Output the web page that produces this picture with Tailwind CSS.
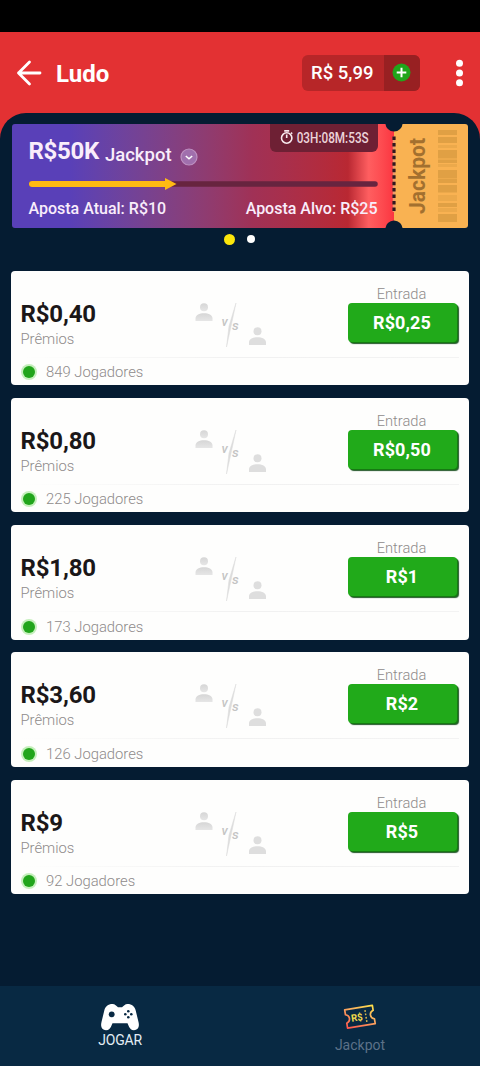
<!DOCTYPE html>
<html lang="pt-BR">
<head>
<meta charset="utf-8">
<title>Ludo</title>
<script src="https://cdn.jsdelivr.net/npm/@tailwindcss/browser@4"></script>
</head>
<body class="w-[480px] h-[1066px] overflow-hidden bg-[#e33133] font-['Roboto',sans-serif] flex flex-col">
<div class="h-8 bg-black shrink-0"></div>
<header class="h-[81px] shrink-0 flex items-center pl-4 pr-[14px] text-white">
  <svg class="w-[26px] h-[26px]" viewBox="0 0 26 26" fill="none" stroke="#fff" stroke-width="2.8" stroke-linecap="round" stroke-linejoin="round"><path d="M13.5 2 2.500 13l11 11M2.500 13H24"/></svg>
  <h1 class="ml-[14px] mt-[2px] text-[24px] leading-7 font-bold">Ludo</h1>
  <div class="ml-auto flex h-9 w-[118px] rounded-md overflow-hidden bg-[#b72628]">
    <div class="w-[82px] pl-[9px] pt-[2px] flex items-center text-[18.500px] font-medium whitespace-nowrap">R$ 5,99</div>
    <div class="flex-1 bg-[#982022] flex items-center pl-2">
      <svg class="w-[19px] h-[19px]" viewBox="0 0 19 19"><circle cx="9.500" cy="9.500" r="9" fill="#21a51b"/><path d="M9.500 4.700v9.600M4.700 9.500h9.600" stroke="#fff" stroke-width="2"/></svg>
    </div>
  </div>
  <svg class="ml-[32px] w-[14px] h-[28px]" viewBox="0 0 14 28" fill="#fff"><circle cx="7.500" cy="4.300" r="3.500"/><circle cx="7.500" cy="14" r="3.500"/><circle cx="7.500" cy="23.700" r="3.500"/></svg>
</header>
<main class="flex-1 bg-[#051c32] rounded-t-[26px] pt-[11px] flex flex-col">
  <section class="mx-3 h-[104px] w-[456px] shrink-0 flex rounded-[3px] overflow-hidden relative">
    <div class="w-[382px] h-full bg-linear-to-r from-[#5940b8] from-15% via-[#a03156] via-63% to-[#b92832] to-88% flex flex-col pl-[16.500px] relative text-[#f9edfb]">
      <div class="absolute right-0 top-0 h-full w-[46px] bg-linear-to-r from-[#c42b2e]/0 via-[#ff5e60] via-45% to-[#fb3440]"></div>
      <div class="relative flex items-start h-[55px]">
        <div class="mt-[13px] text-[24px] leading-[28px] font-bold tracking-[-0.300px]">R$50K</div>
        <div class="ml-[6px] mt-[19px] text-[18.500px] leading-6 font-medium">Jackpot</div>
        <svg class="ml-2 mt-[24px] w-[18px] h-[18px]" viewBox="0 0 18 18"><circle cx="9" cy="9" r="8" fill="#a06fad" stroke="#bd90c0" stroke-width="1.200"/><path d="m5.800 8 3.200 2.800L12.200 8" fill="none" stroke="#fff" stroke-width="1.500"/></svg>
      </div>
      <div class="absolute left-[258px] top-0 w-[108px] h-7 rounded-b-md bg-[#6e2034] flex items-center">
        <svg class="w-[108px] h-7" viewBox="0 0 108 28"><g fill="none" stroke="#f8e9ee" stroke-width="1.600"><circle cx="16.700" cy="14" r="5.200"/><path d="M14.200 6.900h5M16.700 10.500V14M21 8.600l1.200 1.200"/></g><text x="26.700" y="18.800" fill="#ecd4da" font-size="14" font-weight="500" font-family="Roboto" textLength="72" lengthAdjust="spacingAndGlyphs">03H:08M:53S</text></svg>
      </div>
      <svg class="relative w-[350px] h-3 -mt-[1px]" viewBox="0 0 350 12"><path d="M3 6h343" stroke="#67243f" stroke-width="5.500" stroke-linecap="round"/><path d="M3 6h137" stroke="#ffba13" stroke-width="6" stroke-linecap="round"/><path d="M136 0l11.500 6L136 12z" fill="#ffba13"/></svg>
      <div class="relative flex justify-between w-[349px] mt-[9px] text-[16px] leading-5 font-medium whitespace-nowrap"><span>Aposta Atual: R$10</span><span>Aposta Alvo: R$25</span></div>
    </div>
    <svg class="w-[74px] h-[104px]" viewBox="0 0 74 104">
      <rect width="74" height="104" fill="#f9b252"/>
      <text transform="translate(30.500 90) rotate(-90)" font-family="Roboto" font-weight="700" font-size="22.500" fill="#a3702f" textLength="76" lengthAdjust="spacingAndGlyphs">Jackpot</text>
      <g fill="#e0a044">
        <path d="M44 6h19v5H44zM44 13h19v6H44zM44 26h19v8H44zM44 36h19v3H44zM44 46h19v8H44zM44 55h19v4H44zM44 61h19v7H44zM44 79h19v4H44zM44 90h19v8H44z"/>
        <path opacity=".5" d="M44 21h19v3H44zM44 34h19v2H44zM44 40h19v3H44zM44 54h19v1H44zM44 68h19v1H44zM44 71h19v6H44zM44 84h19v4H44z"/>
      </g>
    </svg>
    <svg class="absolute left-[372px] top-0 w-5 h-[104px]" viewBox="0 0 20 104" fill="#051c32"><circle cx="10" cy="-1" r="8.600"/><circle cx="10" cy="105" r="8.600"/><path d="M10 12.500v75.500" stroke="#f09a6a" stroke-width="2.500"/><path d="M10 12.500v76" stroke="#31181f" stroke-width="3.200" stroke-dasharray="3.500 2.950"/></svg>
  </section>
  <div class="flex items-center justify-center h-6 shrink-0 gap-[12px] -mt-[1px] pr-[2px]"><span class="w-[11px] h-[11px] rounded-full bg-[#fce60b]"></span><span class="w-2 h-2 rounded-full bg-white"></span></div>
  <section id="games" class="flex flex-col gap-[12.750px] mt-[19.500px] pl-[10.500px]"></section>
</main>
<nav class="h-20 shrink-0 bg-[#082943] grid grid-cols-2">
  <div class="flex flex-col items-center">
    <svg class="mt-[17px] w-[40px] h-[30px]" viewBox="0 0 40 30"><path fill="#fff" d="M12.500 1C15 1 16.500 3 18 4.300h4C23.500 3 25 1 27.500 1 32 1 34.700 3.500 35.700 7.500L38.500 19c1.300 5-.8 8.200-4.500 8.200-3 0-4.200-1.700-5.200-4L27.500 20.200h-15l-1.300 3c-1 2.300-2.200 4-5.200 4-3.700 0-5.800-3.200-4.500-8.200L4.300 7.500C5.300 3.500 8 1 12.500 1z"/><circle cx="11.700" cy="11.300" r="2.900" fill="#082943"/><g fill="#082943"><circle cx="28.300" cy="8.300" r="1.300"/><circle cx="28.300" cy="14.300" r="1.300"/><circle cx="25.300" cy="11.300" r="1.300"/><circle cx="31.300" cy="11.300" r="1.300"/></g></svg>
    <span class="text-[14px] leading-4 text-[#e3edf5] -mt-[1px] tracking-[-.2px]">JOGAR</span>
  </div>
  <div class="flex flex-col items-center">
    <svg class="mt-[16px] w-[36px] h-[30px]" viewBox="0 0 36 30"><defs><linearGradient id="ticket" x1="0" y1="1" x2="1" y2="0"><stop stop-color="#ff554c"/><stop offset=".6" stop-color="#f9ae61"/><stop offset="1" stop-color="#ffe04a"/></linearGradient></defs><g transform="rotate(-9 18 15)"><path d="M4 5.500h28v5c-4.500 1.500-4.500 7 0 8.500V24H4v-5c4.500-1.500 4.500-7 0-8.500z" fill="none" stroke="url(#ticket)" stroke-width="1.700" stroke-linejoin="round"/><text x="9" y="18.500" font-family="Roboto" font-weight="700" font-size="10" fill="#f5dc4c" textLength="11.500" lengthAdjust="spacingAndGlyphs">R$</text><path d="M24 9v12" stroke="#d8b750" stroke-width="1.500" stroke-dasharray="1.700 1.700"/></g></svg>
    <span class="text-[14px] leading-4 text-[#5c7188] mt-[5px]">Jackpot</span>
  </div>
</nav>
<svg width="0" height="0" class="absolute"><defs>
  <linearGradient id="fade" x1="0" y1="0" x2="0" y2="1"><stop stop-color="#d6d6d6"/><stop offset="1" stop-color="#e6e6e6"/></linearGradient>
  <g id="person"><circle cx="8.500" cy="4.300" r="4"/><path d="M0 18v-2.500C0 12 4 10.300 8.500 10.300S17 12 17 15.500V18z"/></g>
</defs></svg>
<script>
const games = [
  ['R$0,40', '849', 'R$0,25'],
  ['R$0,80', '225', 'R$0,50'],
  ['R$1,80', '173', 'R$1'],
  ['R$3,60', '126', 'R$2'],
  ['R$9', '92', 'R$5'],
];
document.getElementById('games').innerHTML = games.map(([prize, players, entry]) => `
  <article class="w-[458px] h-[114.500px] bg-[#fefefd] rounded-[4px] flex flex-col">
    <div class="h-[86px] flex">
      <div class="w-[180px] pl-[10px] pt-[28px]">
        <div class="text-[24px] leading-[30px] font-bold text-[#1b1718] tracking-[-0.150px]">${prize}</div>
        <div class="text-[14.800px] leading-5 font-light text-[#8f8b8b]">Prêmios</div>
      </div>
      <svg class="w-[80px] h-[86px]" viewBox="0 0 80 86">
        <use href="#person" x="4.500" y="32" fill="url(#fade)"/>
        <use href="#person" x="58" y="56" fill="#dedede"/>
        <path d="M45 32 40.300 54 35.500 76 38 55z" fill="#dcdcdc" stroke="#dcdcdc" stroke-width=".5"/>
        <g font-family="Roboto" font-style="italic" font-weight="500" fill="#c4c4c4"><text x="30.500" y="55" font-size="13">v</text><text x="41" y="59" font-size="13.500">s</text></g>
      </svg>
      <div class="ml-auto mr-[9px] flex flex-col items-center w-[112px] pt-[14px]">
        <div class="mr-[4px] text-[14.700px] leading-[18px] font-light text-[#8f8b8b]">Entrada</div>
        <div class="w-[109px] h-[39px] mr-[3px] rounded-[4px] bg-[#21aa1a] shadow-[1px_1px_0_#167a12,2px_2px_1px_#24582a] flex items-center justify-center text-white text-[18px] font-bold tracking-[.1px]">${entry}</div>
      </div>
    </div>
    <div class="mx-[10px] h-px bg-linear-to-r from-transparent via-[#f1f1f1] to-[#f3f3f3]"></div>
    <div class="h-[27px] flex items-center pl-[12px] pt-[2px]">
      <span class="w-[12px] h-[12px] rounded-full bg-[#21a51b] shadow-[0_0_0_2px_#c5efbc]"></span>
      <span class="ml-[11.500px] text-[14.800px] leading-5 font-light text-[#8f8b8b]">${players} Jogadores</span>
    </div>
  </article>`).join('');
</script>
</body>
</html>
